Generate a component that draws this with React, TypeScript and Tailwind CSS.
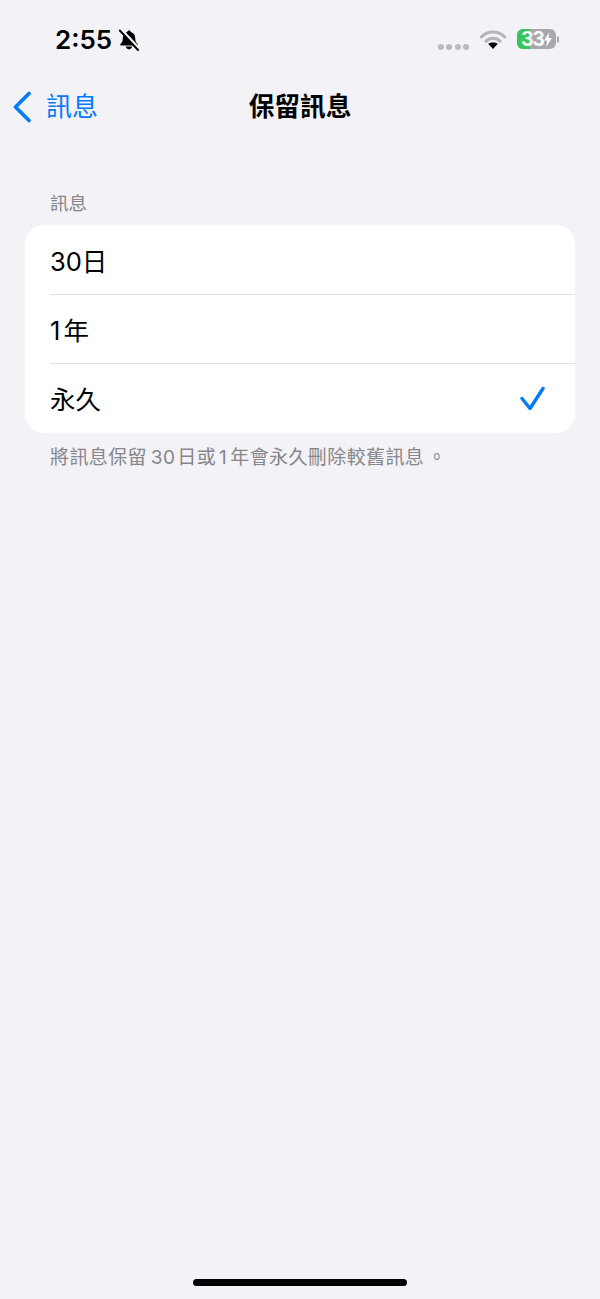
import type { ReactNode } from 'react'

const font = { fontFamily: '"Inter", "Noto Sans CJK TC", sans-serif' }

function BellOff() {
  return (
    <svg width="22" height="24" viewBox="0 0 22 24">
      <path d="M11 2.500c-1 0-1.700.7-1.800 1.600C6.200 4.900 4.800 7.300 4.800 10.300c0 3-.8 4.200-2.300 5.600-.6.6-.3 1.500.6 1.500h15.800c.9 0 1.200-.9.6-1.500-1.500-1.400-2.300-2.600-2.300-5.600 0-3-1.400-5.400-4.400-6.200C12.700 3.200 12 2.500 11 2.500z" fill="#000" />
      <path d="M7.800 18.600h6.400c-.3 1.600-1.600 2.800-3.200 2.800s-2.900-1.200-3.200-2.800z" fill="#000" />
      <path d="M3 1.500 21.400 21" stroke="#f2f2f7" strokeWidth="3" />
      <path d="M1.800 2.500 20 22" stroke="#000" strokeWidth="1.900" strokeLinecap="round" />
    </svg>
  )
}

function Wifi() {
  return (
    <svg width="26" height="19" viewBox="0 0 26 19">
      <path d="M1.500 6.800C4.500 3.800 8.500 2 13 2s8.500 1.800 11.500 4.800" fill="none" stroke="#b5b5ba" strokeWidth="3.200" strokeLinecap="round" />
      <path d="M6 11.200C7.900 9.400 10.300 8.400 13 8.400s5.100 1 7 2.800" fill="none" stroke="#b5b5ba" strokeWidth="3.200" strokeLinecap="round" />
      <path d="M8.200 13.800c1.300-.9 3-1.400 4.800-1.400s3.500.5 4.800 1.400L13 19z" fill="#000" />
    </svg>
  )
}

function Battery() {
  return (
    <div className="flex items-center">
      <div className="relative flex h-[20px] w-[39px] items-center rounded-[6px] bg-[#a9a9ad]">
        <div className="h-full w-[13px] rounded-l-[6px] bg-[#34c759]" />
        <span className="absolute left-[4px] top-0 text-[19.500px] font-bold leading-[20px] tracking-[-1.300px] text-white">33</span>
        <svg className="absolute right-[3px] top-[3px]" width="10" height="15" viewBox="0 0 10 16">
          <path d="M6.500 0 0.800 9h3.400L3 16l6.200-9.500H5.600z" fill="#fff" />
        </svg>
      </div>
      <div className="ml-[1px] h-[7px] w-[2px] rounded-r-sm bg-[#a9a9ad]" />
    </div>
  )
}

function Row({ label, checked, last }: { label: ReactNode; checked?: boolean; last?: boolean }) {
  return (
    <div className="pl-[25px]">
      <div className={`flex h-[69px] items-center justify-between pr-[30px] ${last ? '' : 'border-b border-[#e1e1e4]'}`}>
        <span className="pt-[4px] text-[25.500px] text-black">{label}</span>
        {checked && (
          <svg width="26" height="26" viewBox="0 0 26 26">
            <path d="M3 12.500 11 22.500 24 2.500" fill="none" stroke="#007aff" strokeWidth="3.400" strokeLinecap="round" strokeLinejoin="round" />
          </svg>
        )}
      </div>
    </div>
  )
}

export default function App() {
  return (
    <div className="flex h-[1299px] w-[600px] flex-col bg-[#f2f2f7]" style={font}>
      {/* status bar */}
      <div className="flex h-[80px] items-start justify-between pl-[55px] pr-[41px] pt-[24px]">
        <div className="flex items-center gap-[6px]">
          <span className="text-[26px] font-semibold leading-[32px] text-black">2:55</span>
          <BellOff />
        </div>
        <div className="flex items-start">
          <div className="mr-[11px] mt-[20px] flex gap-[2.500px]">
            {[0, 1, 2, 3].map(i => (
              <div key={i} className="h-[6px] w-[6px] rounded-full bg-[#b9b9be]" />
            ))}
          </div>
          <div className="mt-[6px]">
            <Wifi />
          </div>
          <div className="ml-[11px] mt-[5px]">
            <Battery />
          </div>
        </div>
      </div>

      {/* nav */}
      <div className="relative flex h-[52px] items-center justify-center pt-[2px]">
        <div className="absolute left-[12px] top-[10px] flex items-center gap-[14px]">
          <svg width="20" height="32" viewBox="0 0 20 32">
            <path d="M17 2.500 3.500 16 17 29.500" fill="none" stroke="#007aff" strokeWidth="3.600" strokeLinecap="round" strokeLinejoin="round" />
          </svg>
          <span className="pt-[1px] text-[26px] leading-[32px] text-[#007aff]">訊息</span>
        </div>
        <span className="text-[25.700px] font-semibold text-black">保留訊息</span>
      </div>

      {/* section */}
      <div className="px-[25px] pt-[58px]">
        <div className="pb-[9px] pl-[25px] text-[18.500px] leading-[26px] text-[#86868b]">訊息</div>
        <div className="rounded-[19px] bg-white pt-[1px]">
          <Row label="30日" />
          <Row label={<>1<span className="ml-[3px]">年</span></>} />
          <Row label="永久" checked last />
        </div>
        <div className="pl-[25px] pt-[12px] text-[19px] leading-[26px] tracking-[0.400px] text-[#86868b]">
          將訊息保留<span className="ml-[-2px]"> 30</span><span className="ml-[2px]">日或</span><span className="ml-[3px]">1</span><span className="ml-[3px]">年會永久刪除較舊訊息</span><span className="ml-[3px]">。</span>
        </div>
      </div>

      {/* home indicator */}
      <div className="mt-auto flex justify-center pb-[13px]">
        <div className="h-[7px] w-[214px] rounded-full bg-black" />
      </div>
    </div>
  )
}
